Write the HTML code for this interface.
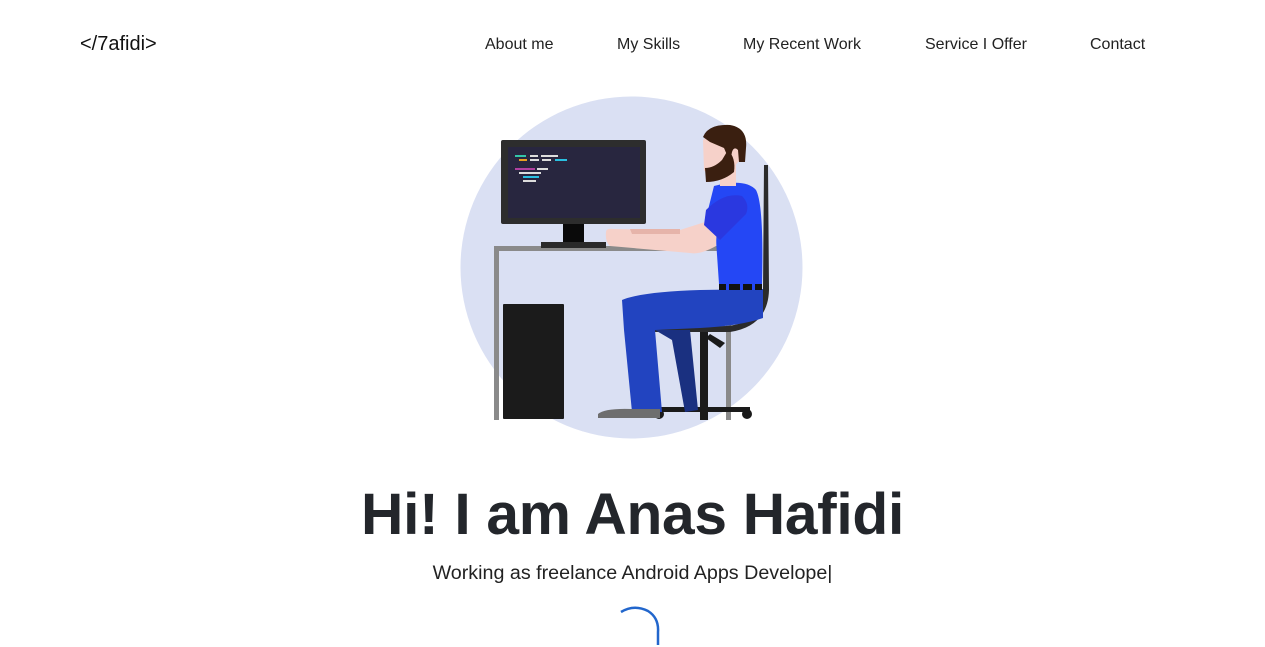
<!DOCTYPE html>
<html><head><meta charset="utf-8"><style>
*{margin:0;padding:0;box-sizing:border-box}
body{width:1265px;height:647px;overflow:hidden;background:#fff;font-family:"Liberation Sans",sans-serif;color:#222;position:relative}
.logo{position:absolute;left:80px;top:33px;font-size:20px;color:#111}
.nav a{position:absolute;top:36px;font-size:16px;color:#222;text-decoration:none;white-space:nowrap}
h1{position:absolute;left:0;width:1265px;text-align:center;top:481px;font-size:58.7px;font-weight:bold;color:#23262b;letter-spacing:-0.3px}
.sub{position:absolute;left:0;width:1265px;text-align:center;top:562px;font-size:19.7px;color:#222}
</style></head><body>
<div class="logo">&lt;/7afidi&gt;</div>
<div class="nav">
<a style="left:485px">About me</a>
<a style="left:617px">My Skills</a>
<a style="left:743px">My Recent Work</a>
<a style="left:925px">Service I Offer</a>
<a style="left:1090px">Contact</a>
</div>
<svg style="position:absolute;left:0;top:0" width="1265" height="647" viewBox="0 0 1265 647">
<circle cx="631.5" cy="267.5" r="171" fill="#dae0f3"/>
<rect x="494" y="246" width="237" height="5" fill="#8a8a8a"/>
<rect x="494" y="246" width="5" height="174" fill="#8a8a8a"/>
<rect x="726" y="250" width="5" height="170" fill="#8a8a8a"/>
<rect x="503" y="304" width="61" height="115" rx="1" fill="#1b1b1b"/>
<rect x="563" y="223" width="21" height="20" fill="#0a0a0a"/>
<rect x="541" y="242" width="65" height="6" fill="#2a2a2a"/>
<rect x="501" y="140" width="145" height="84" rx="2" fill="#2d2d2d"/>
<rect x="508" y="147" width="132" height="71" fill="#28263f"/>
<g stroke-width="2">
<line x1="515" y1="156" x2="526" y2="156" stroke="#33c6a8"/>
<line x1="530" y1="156" x2="538" y2="156" stroke="#ddd"/>
<line x1="541" y1="156" x2="558" y2="156" stroke="#ddd"/>
<line x1="519" y1="160" x2="527" y2="160" stroke="#e6a020"/>
<line x1="530" y1="160" x2="539" y2="160" stroke="#ddd"/>
<line x1="542" y1="160" x2="551" y2="160" stroke="#ddd"/>
<line x1="555" y1="160" x2="567" y2="160" stroke="#2ac0e0"/>
<line x1="515" y1="169" x2="535" y2="169" stroke="#b040a0"/>
<line x1="537" y1="169" x2="548" y2="169" stroke="#ddd"/>
<line x1="519" y1="173" x2="541" y2="173" stroke="#ddd"/>
<line x1="523" y1="177" x2="539" y2="177" stroke="#2ac0e0"/>
<line x1="523" y1="181" x2="536" y2="181" stroke="#ddd"/>
</g>
<path d="M764 165 L768 165 L769 290 Q768 326 730 332 L655 332 L655 327 L728 326 Q762 322 763 290 Z" fill="#2b2b2b"/>
<rect x="700" y="332" width="8" height="88" fill="#1a1a1a"/>
<rect x="655" y="407" width="95" height="5" fill="#1a1a1a"/>
<circle cx="659" cy="414" r="5" fill="#1a1a1a"/>
<circle cx="747" cy="414" r="5" fill="#1a1a1a"/>
<path d="M710 334 L725 343 L720 348 L706 338 Z" fill="#1a1a1a"/>
<path d="M655 330 L690 330 L698 410 L685 412 L672 340 Z" fill="#1a3080"/>
<path d="M622 300 Q640 292 700 290 L763 289 L763 318 Q740 326 700 328 L655 330 L662 412 L632 412 L624 330 Z" fill="#2244c0"/>
<path d="M598 414 Q605 408 632 409 L660 409 L660 418 L598 418 Z" fill="#6e6e6e"/>
<rect x="719" y="284" width="43" height="6" fill="#111"/>
<rect x="726" y="284" width="3" height="6" fill="#2447f5"/><rect x="740" y="284" width="3" height="6" fill="#2447f5"/><rect x="752" y="284" width="3" height="6" fill="#2447f5"/>
<path d="M714 186 Q745 178 756 190 Q764 205 762 284 L719 284 L716 240 L706 218 Z" fill="#2447f5"/>
<path d="M606 232 Q606 228 614 229 L680 230 L705 222 L717 224 L716 246 Q700 255 690 253 L610 246 Q605 242 606 232 Z" fill="#f6d1c9"/>
<path d="M630 229 L680 229 L680 234 L632 234 Z" fill="#e6b4aa"/>
<path d="M706 210 Q724 192 742 196 Q750 204 746 214 L720 240 L704 225 Z" fill="#2a38e0"/>
<rect x="720" y="160" width="16" height="26" fill="#f6d1c9"/>
<path d="M703 140 Q716 128 738 136 L740 160 L722 180 Q708 176 704 170 Z" fill="#f6d1c9"/>
<path d="M705 168 Q714 168 722 160 L728 150 Q736 158 734 172 Q722 182 706 182 Z" fill="#3a1f10"/>
<path d="M703 137 Q708 124 730 125 Q748 128 746 148 L745 162 L739 162 L738 150 Q734 146 732 152 L730 162 L724 148 L710 142 Z" fill="#3a1f10"/>
<path d="M621 612 Q634 604 648 611 Q659 618 658 632 L658 645" fill="none" stroke="#2266cc" stroke-width="2.5"/>
</svg>
<h1>Hi! I am Anas Hafidi</h1>
<div class="sub">Working as freelance Android Apps Develope|</div>
</body></html>
